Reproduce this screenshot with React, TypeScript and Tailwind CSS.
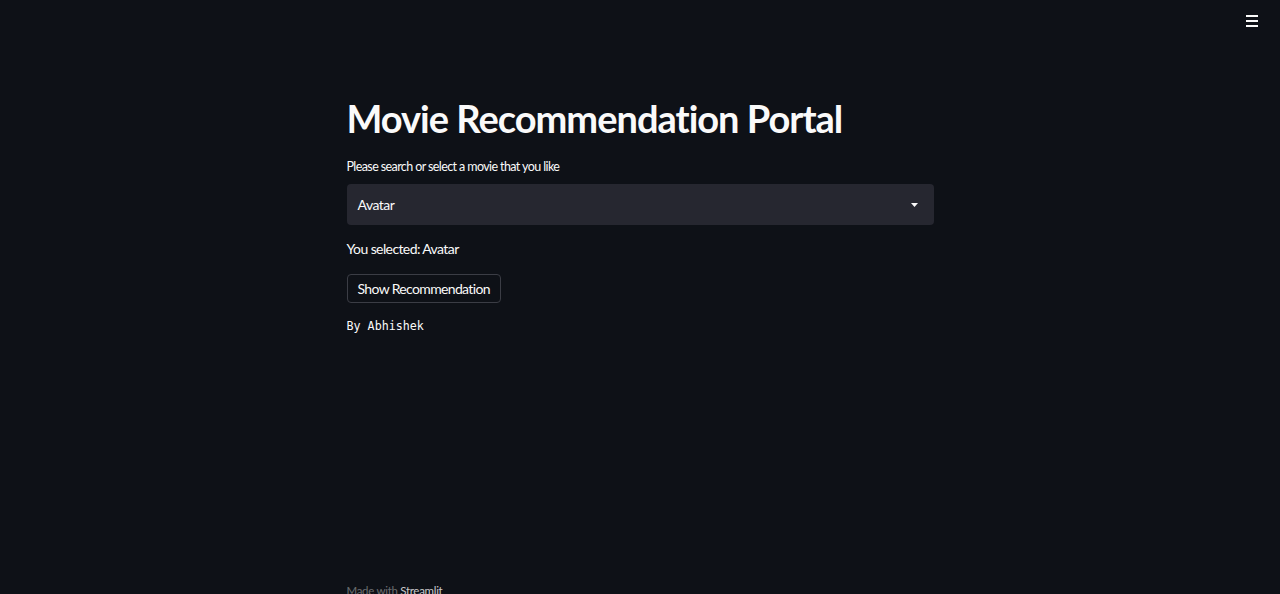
export default function App() {
  return (
    <div
      className="relative h-[594px] w-full overflow-hidden bg-[#0e1117] text-[#fafafa]"
      style={{ fontFamily: "Lato, 'Noto Sans', sans-serif" }}
    >
      {/* top-right menu */}
      <button className="absolute right-[22px] top-[15px] flex flex-col gap-[3px] p-0">
        <span className="block h-[2px] w-[12px] bg-[#fafafa]" />
        <span className="block h-[2px] w-[12px] bg-[#fafafa]" />
        <span className="block h-[2px] w-[12px] bg-[#fafafa]" />
      </button>

      <div className="mx-auto flex h-full w-[587px] flex-col">
        <h1 className="mt-[95px] whitespace-nowrap text-[38px] font-bold leading-[46px] tracking-[-1px]">
          Movie Recommendation Portal
        </h1>

        <label className="mt-[16px] whitespace-nowrap text-[12.5px] leading-[20px] tracking-[-0.6px]">
          Please search or select a movie that you like
        </label>

        <div className="mt-[7px] flex h-[41px] items-center justify-between rounded-[4px] bg-[#262730] pl-[11px] pr-[16px]">
          <span className="text-[14px] tracking-[-0.5px]">Avatar</span>
          <svg width="7" height="4" viewBox="0 0 7 4">
            <path d="M0 0h7L3.5 4z" fill="#fafafa" />
          </svg>
        </div>

        <p className="mt-[12px] whitespace-nowrap text-[14px] leading-[24px] tracking-[-0.6px]">
          You selected: Avatar
        </p>

        <div className="mt-[13px]">
          <button className="h-[29px] whitespace-nowrap rounded-[4px] border border-[#3b3d45] bg-[#0e1117] px-[10px] text-[14px] leading-none tracking-[-0.65px]">
            Show Recommendation
          </button>
        </div>

        <p
          className="mt-[14px] text-[11.7px] leading-[18px]"
          style={{ fontFamily: "'DejaVu Sans Mono', monospace" }}
        >
          By Abhishek
        </p>

        <div className="mt-auto mb-[-7px] whitespace-nowrap text-[11.5px] leading-[20px] tracking-[-0.3px] text-[#fafafa]/40">
          Made with <span className="text-[#fafafa]/80">Streamlit</span>
        </div>
      </div>
    </div>
  );
}
